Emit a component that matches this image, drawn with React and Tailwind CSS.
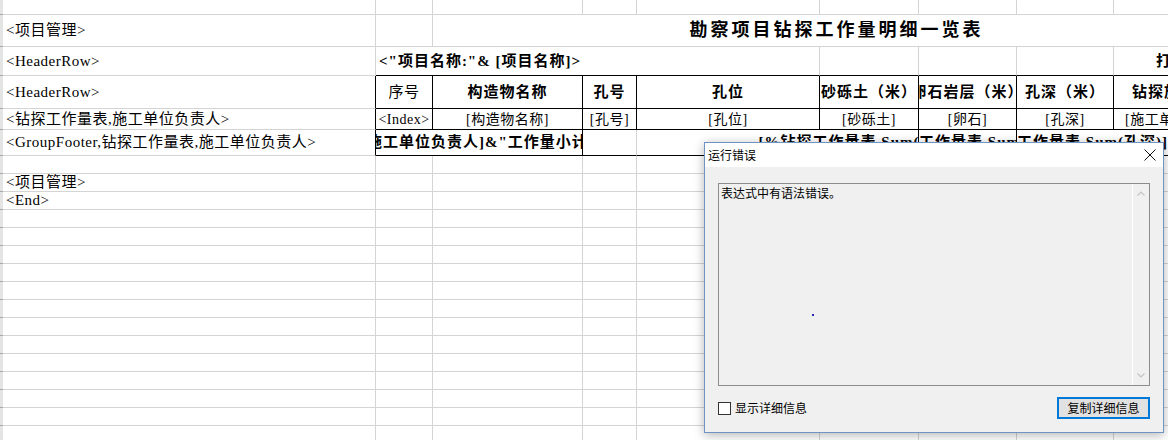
import React from 'react';

const SHEET = "font-['Liberation_Serif','Noto_Sans_CJK_SC',serif]";
const UI = "font-['Noto_Sans_CJK_SC','Noto_Sans',sans-serif]";

const COLS = ['w-[373px]', 'w-[57px]', 'w-[150px]', 'w-[54px]', 'w-[183px]', 'w-[99px]', 'w-[98px]', 'w-[97px]', 'w-[160px]'];

const GRAY = 'border-r border-b border-[#d4d4d4]';
const BLACK = 'border-r border-b border-black';
const LEFT_EDGE = 'border-r border-b border-r-black border-b-[#d4d4d4]';

function Row({ h, children }) {
  return (
    <div className={`flex shrink-0 ${h}`}>
      <div className="w-[3px] shrink-0 bg-[#e4e4e4] border-b border-[#a8a8a8]" />
      {children}
    </div>
  );
}

function Cell({ w, className = GRAY, children }) {
  return <div className={`${w} shrink-0 flex items-center min-w-0 whitespace-nowrap ${className}`}>{children}</div>;
}

function EmptyRow({ h = 'h-[18px]', label }) {
  return (
    <Row h={h}>
      {COLS.map((w, i) => (
        <Cell key={i} w={w}>
          {i === 0 && label && <span className="pl-[3px] text-[15px]">{label}</span>}
        </Cell>
      ))}
    </Row>
  );
}

export default function App() {
  return (
    <div className={`relative w-[1168px] h-[440px] overflow-hidden bg-white text-black flex flex-col ${SHEET} tracking-[0.5px]`}>
      <EmptyRow h="h-[15px]" />

      {/* 标题 */}
      <Row h="h-[32px]">
        <Cell w="w-[373px]"><span className="pl-[3px] text-[15px]">&lt;项目管理&gt;</span></Cell>
        <Cell w="w-[57px]" />
        <div className="flex-1 flex items-center justify-center pl-[72px] border-b border-[#d4d4d4] text-[18px] font-bold tracking-[3px] whitespace-nowrap">
          勘察项目钻探工作量明细一览表
        </div>
      </Row>

      {/* 项目名称 */}
      <Row h="h-[29px]">
        <Cell w="w-[373px]"><span className="pl-[3px] text-[15px]">&lt;HeaderRow&gt;</span></Cell>
        <Cell w="w-[57px]" className="border-b border-black">
          <span className="pl-[3px] font-bold text-[15px] tracking-[1px]">&lt;"项目名称:"&amp; [项目名称]&gt;</span>
        </Cell>
        <Cell w="w-[150px]" className="border-b border-black" />
        <Cell w="w-[54px]" className="border-b border-black" />
        <Cell w="w-[183px]" className="border-r border-b border-r-[#d4d4d4] border-b-black" />
        <Cell w="w-[99px]" className="border-r border-b border-r-[#d4d4d4] border-b-black" />
        <Cell w="w-[98px]" className="border-r border-b border-r-[#d4d4d4] border-b-black" />
        <Cell w="w-[97px]" className="border-r border-b border-r-[#d4d4d4] border-b-black" />
        <Cell w="w-[160px]" className="border-b border-black">
          <span className="pl-[42px] font-bold text-[15px]">打印日期</span>
        </Cell>
      </Row>

      {/* 表头 */}
      <Row h="h-[33px]">
        <Cell w="w-[373px]" className={LEFT_EDGE}><span className="pl-[3px] text-[15px]">&lt;HeaderRow&gt;</span></Cell>
        <Cell w="w-[57px]" className={`${BLACK} justify-center text-[15px]`}>序号</Cell>
        <Cell w="w-[150px]" className={`${BLACK} justify-center text-[15px] font-bold tracking-[1px]`}>构造物名称</Cell>
        <Cell w="w-[54px]" className={`${BLACK} justify-center text-[15px] font-bold tracking-[1px]`}>孔号</Cell>
        <Cell w="w-[183px]" className={`${BLACK} justify-center text-[15px] font-bold tracking-[1px]`}>孔位</Cell>
        <Cell w="w-[99px]" className={`${BLACK} justify-center text-[15px] font-bold tracking-[1px] overflow-hidden`}>砂砾土（米）</Cell>
        <Cell w="w-[98px]" className={`${BLACK} justify-center text-[15px] font-bold tracking-[1px] overflow-hidden`}>卵石岩层（米）</Cell>
        <Cell w="w-[97px]" className={`${BLACK} justify-center text-[15px] font-bold tracking-[1px] overflow-hidden`}>孔深（米）</Cell>
        <Cell w="w-[160px]" className={`${BLACK} text-[15px] font-bold tracking-[1px] overflow-hidden`}>
          <span className="pl-[18px]">钻探施工单位</span>
        </Cell>
      </Row>

      {/* 明细 */}
      <Row h="h-[21px]">
        <Cell w="w-[373px]" className={LEFT_EDGE}><span className="pl-[3px] text-[15px]">&lt;钻探工作量表,施工单位负责人&gt;</span></Cell>
        <Cell w="w-[57px]" className={`${BLACK} justify-center text-[14px] overflow-hidden`}>&lt;Index&gt;</Cell>
        <Cell w="w-[150px]" className={`${BLACK} justify-center text-[14px]`}>[构造物名称]</Cell>
        <Cell w="w-[54px]" className={`${BLACK} justify-center text-[14px]`}>[孔号]</Cell>
        <Cell w="w-[183px]" className={`${BLACK} justify-center text-[14px]`}>[孔位]</Cell>
        <Cell w="w-[99px]" className={`${BLACK} justify-center text-[14px]`}>[砂砾土]</Cell>
        <Cell w="w-[98px]" className={`${BLACK} justify-center text-[14px]`}>[卵石]</Cell>
        <Cell w="w-[97px]" className={`${BLACK} justify-center text-[14px]`}>[孔深]</Cell>
        <Cell w="w-[160px]" className={`${BLACK} text-[14px] overflow-hidden`}>
          <span className="pl-[11px]">[施工单位负责人]</span>
        </Cell>
      </Row>

      {/* 小计 */}
      <Row h="h-[26px]">
        <Cell w="w-[373px]" className={LEFT_EDGE}><span className="pl-[3px] text-[15px]">&lt;GroupFooter,钻探工作量表,施工单位负责人&gt;</span></Cell>
        <Cell w="w-[207px]" className={`${BLACK} justify-center overflow-hidden text-[15px] font-bold tracking-[1px]`}>
          [施工单位负责人]&amp;"工作量小计"
        </Cell>
        <Cell w="w-[54px]" className="border-r border-b border-r-[#d4d4d4] border-b-black" />
        <Cell w="w-[183px]" className="border-b border-black" />
        <Cell w="w-[99px]" className={`${BLACK} justify-center text-[15px] font-bold tracking-[1px] [clip-path:inset(0_0_0_-300px)]`}>
          [%钻探工作量表.Sum(砂砾土)]
        </Cell>
        <Cell w="w-[98px]" className={`${BLACK} justify-center overflow-hidden text-[15px] font-bold tracking-[1px]`}>
          [%钻探工作量表.Sum(卵石)]
        </Cell>
        <Cell w="w-[97px]" className={`border-b border-black justify-center text-[15px] font-bold tracking-[1px] [clip-path:inset(0_-300px_0_0)]`}>
          [%钻探工作量表.Sum(孔深)]
        </Cell>
        <Cell w="w-[160px]" className="border-b border-black" />
      </Row>

      <EmptyRow />
      <EmptyRow label="<项目管理>" />
      <EmptyRow label="<End>" />
      {Array.from({ length: 14 }).map((_, i) => (
        <EmptyRow key={i} />
      ))}

      {/* 运行错误 对话框 */}
      <div className={`absolute left-[704px] top-[142px] w-[460px] h-[291px] border border-[#7193c2] bg-[#f0f0f0] shadow-[0_2px_10px_rgba(0,0,0,0.3)] flex flex-col ${UI} tracking-normal text-[12px] text-black`}>
        <div className="h-[24px] shrink-0 bg-white flex items-center justify-between pl-[3px] pr-[7px]">
          <span>运行错误</span>
          <svg width="12" height="12" viewBox="0 0 12 12">
            <path d="M0.5 0.5L11.5 11.5M11.5 0.5L0.5 11.5" stroke="#111" strokeWidth="1" fill="none" />
          </svg>
        </div>
        <div className="flex-1 flex flex-col px-[13px] pt-[16px]">
          <div className="relative h-[203px] border border-[#8c8c8c] flex">
            <div className="flex-1 pl-[2px] pt-[2px] leading-[14px]">表达式中有语法错误。</div>
            <div className="w-[17px] border-l border-white flex flex-col justify-between items-center py-[7px]">
              <svg width="8" height="5" viewBox="0 0 8 5">
                <path d="M0.5 4.5L4 1L7.5 4.5" stroke="#c4c4c4" strokeWidth="1.2" fill="none" />
              </svg>
              <svg width="8" height="5" viewBox="0 0 8 5">
                <path d="M0.5 0.5L4 4L7.5 0.5" stroke="#c4c4c4" strokeWidth="1.2" fill="none" />
              </svg>
            </div>
            <span className="absolute left-[93px] top-[130px] w-[2px] h-[2px] bg-[#2a2ab0]" />
          </div>
          <div className="mt-[11px] flex items-center justify-between">
            <label className="flex items-center gap-[4px]">
              <span className="w-[13px] h-[13px] border border-[#333] bg-white" />
              显示详细信息
            </label>
            <button className="w-[93px] h-[22px] border-2 border-[#0078d7] bg-[#e1e1e1] text-[12px] leading-none">
              复制详细信息
            </button>
          </div>
        </div>
      </div>
    </div>
  );
}
